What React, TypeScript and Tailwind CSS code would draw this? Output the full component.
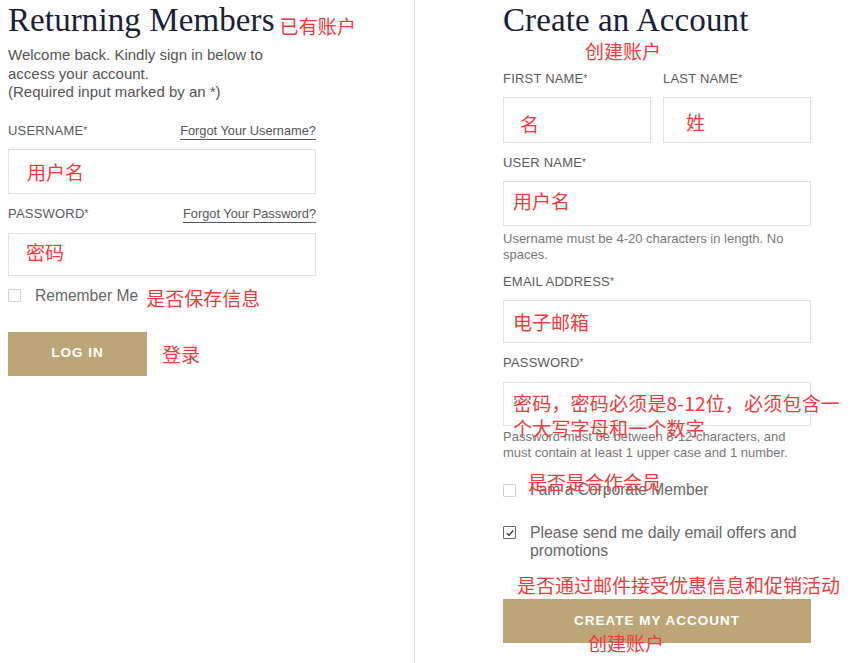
import React from 'react';

const sans = "font-['Liberation_Sans',Arial,sans-serif]";
const serif = "font-['Liberation_Serif','Times_New_Roman',serif]";
const cjk = "font-['Noto_Sans_CJK_SC',sans-serif]";

const Note = ({ children, className = '' }: { children: React.ReactNode; className?: string }) => (
  <span className={`${cjk} text-[19px] text-[#f23a3a] whitespace-nowrap ${className}`}>{children}</span>
);

const Label = ({ children }: { children: React.ReactNode }) => (
  <div className="text-[13px] leading-[18px] tracking-[0.2px] text-[#5a5a5a] uppercase">
    {children}
    <span className="text-[10px] align-top">*</span>
  </div>
);

const Box = ({ h, children }: { h: string; children?: React.ReactNode }) => (
  <div className={`${h} border border-[#e2e2e2] bg-white flex items-center`}>{children}</div>
);

const Check = ({ checked = false }: { checked?: boolean }) => (
  <span
    className={`inline-flex h-[13px] w-[13px] shrink-0 items-center justify-center rounded-[1px] border ${
      checked ? 'border-[#666]' : 'border-[#d2d2d2]'
    }`}
  >
    {checked && (
      <svg viewBox="0 0 12 12" className="h-[10px] w-[10px]">
        <path d="M2.2 6.2 L4.8 8.8 L9.8 3" fill="none" stroke="#333" strokeWidth="1.6" />
      </svg>
    )}
  </span>
);

export default function App() {
  return (
    <div className={`relative flex h-[663px] w-[851px] bg-white ${sans}`}>
      {/* Returning Members */}
      <div className="w-[415px] border-r border-[#dcdcdc] pl-2">
        <div className="w-[308px]">
          <h1 className={`${serif} flex items-center whitespace-nowrap text-[33px] leading-[40px] tracking-[0.1px] text-[#1b2036]`}>
            Returning Members
            <Note className="ml-[5px] mt-[12px] leading-[26px]">已有账户</Note>
          </h1>
          <p className="mt-[6px] text-[15px] leading-[18.5px] text-[#555]">
            Welcome back. Kindly sign in below to
            <br />
            access your account.
            <br />
            (Required input marked by an *)
          </p>

          <div className="mt-[20px] flex items-end justify-between">
            <Label>Username</Label>
            <a className="border-b border-[#555] text-[12.8px] leading-[17px] text-[#555]">Forgot Your Username?</a>
          </div>
          <div className="mt-[9px]">
            <Box h="h-[45px]">
              <Note className="ml-[18px] mt-[2px] leading-[26px]">用户名</Note>
            </Box>
          </div>

          <div className="mt-[11px] flex items-end justify-between">
            <Label>Password</Label>
            <a className="border-b border-[#555] text-[12.8px] leading-[17px] text-[#555]">Forgot Your Password?</a>
          </div>
          <div className="mt-[10px]">
            <Box h="h-[43px]">
              <Note className="ml-[17px] -mt-[5px] leading-[26px]">密码</Note>
            </Box>
          </div>

          <div className="mt-[11px] flex h-[18px] items-center">
            <Check />
            <span className="ml-[14px] text-[15.6px] leading-[18px] text-[#666]">Remember Me</span>
            <Note className="ml-[8px] mt-[5px] leading-[20px]">是否保存信息</Note>
          </div>

          <div className="mt-[27px] flex items-center">
            <button className="h-[44px] w-[139px] bg-[#bca678] text-[13.5px] font-bold tracking-[1px] text-white">
              LOG IN
            </button>
            <Note className="ml-[15px] leading-[26px]">登录</Note>
          </div>
        </div>
      </div>

      {/* Create an Account */}
      <div className="relative pl-[88px]">
        <div className="w-[308px]">
          <h1 className={`${serif} whitespace-nowrap text-[33px] leading-[40px] tracking-[0.1px] text-[#1b2036]`}>
            Create an Account
          </h1>
          <Note className="absolute left-[170px] top-[38px] leading-[26px]">创建账户</Note>

          <div className="mt-[30px] grid grid-cols-2 gap-x-[12px]">
            <div>
              <Label>First Name</Label>
              <div className="mt-[9px]">
                <Box h="h-[46px]">
                  <Note className="ml-[16px] mt-[8px] leading-[26px]">名</Note>
                </Box>
              </div>
            </div>
            <div>
              <Label>Last Name</Label>
              <div className="mt-[9px]">
                <Box h="h-[46px]">
                  <Note className="ml-[22px] mt-[4px] leading-[26px]">姓</Note>
                </Box>
              </div>
            </div>
          </div>

          <div className="mt-[11px]">
            <Label>User Name</Label>
          </div>
          <div className="mt-[9px]">
            <Box h="h-[45px]">
              <Note className="ml-[9px] -mt-[6px] leading-[26px]">用户名</Note>
            </Box>
          </div>
          <p className="mt-[5px] text-[13px] leading-[15.5px] text-[#777]">
            Username must be 4-20 characters in length. No spaces.
          </p>

          <div className="mt-[11px]">
            <Label>Email Address</Label>
          </div>
          <div className="mt-[9px]">
            <Box h="h-[43px]">
              <Note className="ml-[9px] leading-[26px]">电子邮箱</Note>
            </Box>
          </div>

          <div className="mt-[11px]">
            <Label>Password</Label>
          </div>
          <div className="relative mt-[10px]">
            <Box h="h-[44px]" />
            <Note className="absolute left-[10px] top-[8px] leading-[25px] tracking-[0.2px]">
              密码，密码必须是8-12位，必须包含一
              <br />
              个大写字母和一个数字
            </Note>
          </div>
          <p className="mt-[3px] text-[13px] leading-[15.5px] text-[#777]">
            Password must be between 8-12 characters, and must contain at least 1 upper case and 1 number.
          </p>

          <div className="relative mt-[21px] flex h-[18px] items-center">
            <Check />
            <span className="ml-[14px] text-[15.6px] leading-[18px] text-[#666]">I am a Corporate Member</span>
            <Note className="absolute left-[25px] -top-[12px] leading-[26px]">是否是合作会员</Note>
          </div>

          <div className="mt-[25px] flex items-start">
            <span className="mt-[2px] flex">
              <Check checked />
            </span>
            <span className="ml-[14px] text-[15.8px] leading-[18px] text-[#666]">
              Please send me daily email offers and
              <br />
              promotions
            </span>
          </div>

          <div className="relative mt-[39px]">
            <Note className="absolute left-[14px] -top-[27px] leading-[26px]">是否通过邮件接受优惠信息和促销活动</Note>
            <button className="h-[44px] w-[308px] bg-[#bca678] text-[13.5px] font-bold tracking-[1px] text-white">
              CREATE MY ACCOUNT
            </button>
            <Note className="absolute left-[85px] top-[31px] leading-[26px]">创建账户</Note>
          </div>
        </div>
      </div>
    </div>
  );
}
